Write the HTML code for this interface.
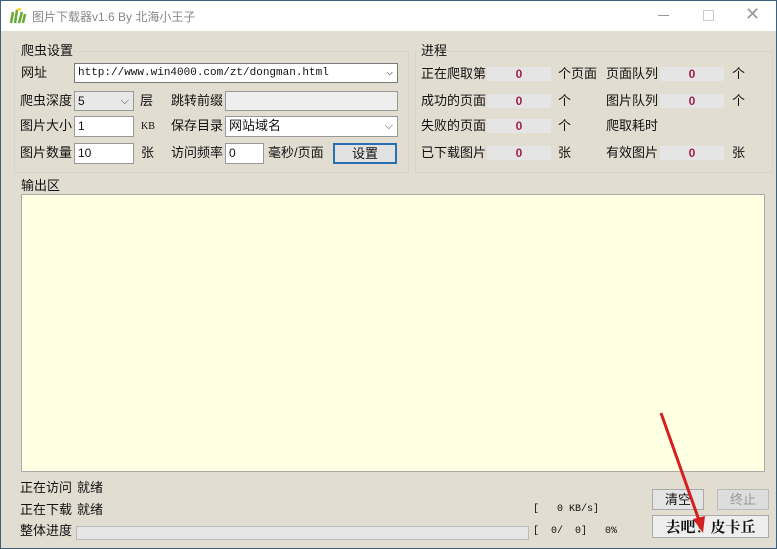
<!DOCTYPE html>
<html><head><meta charset="utf-8"><style>
body{margin:0;width:777px;height:549px;overflow:hidden;font-family:"Liberation Sans","Noto Sans CJK SC",sans-serif;font-size:13px;line-height:16px;color:#111}
#w{position:absolute;left:0;top:0;width:775px;height:547px;border:1px solid #3d5f7a;background:#e2ddd1;overflow:hidden}
#tb{position:absolute;left:0;top:0;width:775px;height:30px;background:#fff}
.a{position:absolute;white-space:nowrap}
.in{position:absolute;background:#fff;border:1px solid #999;box-sizing:border-box;font-size:12px;padding:1px 3px;line-height:16px}
.g{position:absolute;border:1px solid #d8d4cc;border-radius:2px}
.bx{position:absolute;background:#e6e5e6;height:14px;width:64px;color:#a0204a;font-weight:bold;font-size:12px;text-align:center;line-height:14px}
.dd{position:absolute;right:4px;top:1px;color:#444;font-size:11px}
</style></head><body><div id="w">
<div id="tb">
<svg class="a" style="left:8px;top:7px" width="18" height="16"><path d="M2 15L4 4M6 15L8 2M10 15L13 4M14 15L16 6" stroke="#6a3" stroke-width="2.5"/><path d="M8 2L12 1" stroke="#fc0" stroke-width="2"/></svg>
<div class="a" style="left:31px;top:8px;color:#888;font-size:12px">图片下载器v1.6 By 北海小王子</div>
<div class="a" style="left:657px;top:14px;width:11px;border-top:1px solid #999"></div>
<div class="a" style="left:702px;top:9px;width:9px;height:9px;border:1px solid #ccc"></div>
<div class="a" style="left:744px;top:5px;color:#999;font-size:18px">✕</div>
</div>
<div class="g" style="left:13px;top:50px;width:393px;height:120px"></div>
<div class="g" style="left:414px;top:50px;width:356px;height:120px"></div>
<div class="a" style="left:20px;top:42px;background:#e2ddd1">爬虫设置</div>
<div class="a" style="left:420px;top:42px;background:#e2ddd1">进程</div>
<div class="a" style="left:20px;top:64px">网址</div>
<div class="in" style="left:73px;top:62px;width:324px;height:20px;font-family:'Liberation Mono',monospace;font-size:11px;border-color:#7a7a7a">http://www.win4000.com/zt/dongman.html<span class="dd">⌵</span></div>
<div class="a" style="left:19px;top:92px">爬虫深度</div>
<div class="in" style="left:73px;top:90px;width:60px;height:20px;background:#e8e8e8">5<span class="dd">⌵</span></div>
<div class="a" style="left:139px;top:92px">层</div>
<div class="a" style="left:170px;top:92px">跳转前缀</div>
<div class="in" style="left:224px;top:90px;width:173px;height:20px;background:#eee"></div>
<div class="a" style="left:19px;top:117px">图片大小</div>
<div class="in" style="left:73px;top:115px;width:60px;height:21px">1</div>
<div class="a" style="left:140px;top:118px;font-size:10px;font-family:'Liberation Serif',serif">KB</div>
<div class="a" style="left:170px;top:117px">保存目录</div>
<div class="in" style="left:224px;top:115px;width:173px;height:21px;font-size:13px">网站域名<span class="dd">⌵</span></div>
<div class="a" style="left:19px;top:144px">图片数量</div>
<div class="in" style="left:73px;top:142px;width:60px;height:21px">10</div>
<div class="a" style="left:140px;top:144px">张</div>
<div class="a" style="left:170px;top:144px">访问频率</div>
<div class="in" style="left:224px;top:142px;width:39px;height:21px">0</div>
<div class="a" style="left:267px;top:144px">毫秒/页面</div>
<div class="a" style="left:332px;top:142px;width:64px;height:21px;box-sizing:border-box;border:2px solid #2a6fb5;background:#e1e1e1;text-align:center;line-height:17px">设置</div>
<div class="a" style="left:420px;top:65px">正在爬取第</div><div class="bx" style="left:486px;top:66px">0</div><div class="a" style="left:557px;top:65px">个页面</div>
<div class="a" style="left:605px;top:65px">页面队列</div><div class="bx" style="left:659px;top:66px">0</div><div class="a" style="left:731px;top:65px">个</div>
<div class="a" style="left:420px;top:92px">成功的页面</div><div class="bx" style="left:486px;top:93px">0</div><div class="a" style="left:557px;top:92px">个</div>
<div class="a" style="left:605px;top:92px">图片队列</div><div class="bx" style="left:659px;top:93px">0</div><div class="a" style="left:731px;top:92px">个</div>
<div class="a" style="left:420px;top:117px">失败的页面</div><div class="bx" style="left:486px;top:118px">0</div><div class="a" style="left:557px;top:117px">个</div>
<div class="a" style="left:605px;top:117px">爬取耗时</div>
<div class="a" style="left:420px;top:144px">已下载图片</div><div class="bx" style="left:486px;top:145px">0</div><div class="a" style="left:557px;top:144px">张</div>
<div class="a" style="left:605px;top:144px">有效图片</div><div class="bx" style="left:659px;top:145px">0</div><div class="a" style="left:731px;top:144px">张</div>
<div class="a" style="left:20px;top:177px">输出区</div>
<div class="a" style="left:20px;top:193px;width:744px;height:278px;background:#ffffe1;border:1px solid #aaa;box-sizing:border-box"></div>
<div class="a" style="left:19px;top:479px">正在访问</div><div class="a" style="left:76px;top:479px">就绪</div>
<div class="a" style="left:19px;top:501px">正在下载</div><div class="a" style="left:76px;top:501px">就绪</div>
<div class="a" style="left:19px;top:522px">整体进度</div>
<div class="a" style="left:75px;top:525px;width:451px;height:12px;background:#e6e6e6;border:1px solid #bbb"></div>
<div class="a" style="left:532px;top:501px;font-family:'Liberation Mono',monospace;font-size:10px">[&nbsp;&nbsp;&nbsp;0 KB/s]</div>
<div class="a" style="left:532px;top:523px;font-family:'Liberation Mono',monospace;font-size:10px">[&nbsp;&nbsp;0/&nbsp;&nbsp;0]&nbsp;&nbsp;&nbsp;0%</div>
<div class="a" style="left:651px;top:488px;width:52px;height:21px;background:#e4e4e4;border:1px solid #aaa;box-sizing:border-box;text-align:center;line-height:19px">清空</div>
<div class="a" style="left:716px;top:488px;width:52px;height:21px;background:#ddd;border:1px solid #bbb;box-sizing:border-box;text-align:center;line-height:19px;color:#999">终止</div>
<div class="a" style="left:651px;top:514px;width:117px;height:23px;background:#eee;border:1px solid #aaa;box-sizing:border-box;text-align:center;line-height:21px;font-weight:bold;font-size:15px;font-family:'Noto Serif CJK SC',serif">去吧！皮卡丘</div>
<svg class="a" style="left:0;top:0" width="777" height="549"><path d="M660 412L699 522" stroke="#d42020" stroke-width="3"/><path d="M692 518L702 532L704 515Z" fill="#d42020"/></svg>
</div></body></html>
